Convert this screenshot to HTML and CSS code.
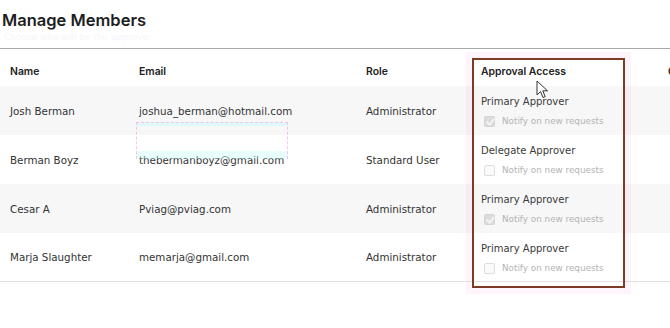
FILE: index.html
```html
<!DOCTYPE html>
<html>
<head>
<meta charset="utf-8">
<link rel="stylesheet" href="styles.css">
</head>
<body>
<div class="page">
  <header class="head">
    <h1 class="title">Manage Members</h1>
    <p class="subtitle">Choose who will be the approver</p>
  </header>
  <div class="table">
    <div class="row hdr">
      <div class="cell">Name</div>
      <div class="cell">Email</div>
      <div class="cell">Role</div>
      <div class="cell">Approval Access</div>
      <div class="cell">C</div>
    </div>
    <div class="row shade">
      <div class="cell">Josh Berman</div>
      <div class="cell">joshua_berman@hotmail.com</div>
      <div class="cell">Administrator</div>
      <div class="cell appr">
        <div class="atype">Primary Approver</div>
        <label class="notify"><span class="cb checked"></span>Notify on new requests</label>
      </div>
      <div class="cell"></div>
    </div>
    <div class="row">
      <div class="cell">Berman Boyz</div>
      <div class="cell">thebermanboyz@gmail.com</div>
      <div class="cell">Standard User</div>
      <div class="cell appr">
        <div class="atype">Delegate Approver</div>
        <label class="notify"><span class="cb"></span>Notify on new requests</label>
      </div>
      <div class="cell"></div>
    </div>
    <div class="row shade">
      <div class="cell">Cesar A</div>
      <div class="cell">Pviag@pviag.com</div>
      <div class="cell">Administrator</div>
      <div class="cell appr">
        <div class="atype">Primary Approver</div>
        <label class="notify"><span class="cb checked"></span>Notify on new requests</label>
      </div>
      <div class="cell"></div>
    </div>
    <div class="row last">
      <div class="cell">Marja Slaughter</div>
      <div class="cell">memarja@gmail.com</div>
      <div class="cell">Administrator</div>
      <div class="cell appr">
        <div class="atype">Primary Approver</div>
        <label class="notify"><span class="cb"></span>Notify on new requests</label>
      </div>
      <div class="cell"></div>
    </div>
    <div class="highlight"></div>
    <div class="selection"></div>
    <svg class="cursor" width="14" height="20" viewBox="0 0 14 20"><path d="M1 1 L1 15 L4.5 11.5 L7 17.5 L9.2 16.6 L6.8 10.8 L11.5 10.8 Z" fill="#fff" stroke="#333" stroke-width="1"/></svg>
  </div>
</div>
</body>
</html>
```
FILE: styles.css
```css
* { box-sizing: border-box; }
html, body { margin: 0; padding: 0; background: #fff; }
body {
  font-family: "DejaVu Sans", "Open Sans", sans-serif;
  color: #333;
  width: 670px;
  height: 328px;
  overflow: hidden;
}
.page { width: 670px; }
.head {
  height: 49px;
  padding: 10px 0 0 2px;
  border-bottom: 1px solid #a9a9a9;
}
.title {
  margin: 0;
  font-family: "Inter", "DejaVu Sans", sans-serif;
  font-size: 16.5px;
  font-weight: 600;
  color: #1e1e1e;
  line-height: 20px;
}
.subtitle {
  margin: 1px 0 0 2px;
  font-size: 9px;
  line-height: 12px;
  color: #f6f6fa;
}
.table { position: relative; }
.row {
  display: grid;
  grid-template-columns: 129px 227px 115px 187px 1fr;
  padding-left: 10px;
  height: 49px;
  align-items: center;
  font-size: 10.3px;
  line-height: 16px;
  color: #333;
}
.row.hdr {
  height: 37px;
  padding-top: 9px;
  font-family: "Inter", "DejaVu Sans", sans-serif;
  font-weight: 600;
  color: #222;
  font-size: 10.4px;
}
.row.shade { background: #f7f7f8; }
.row.last { border-bottom: 1px solid #e2e2e2; }
.cell { white-space: nowrap; }
.appr { align-self: stretch; padding-top: 9px; }
.atype { font-size: 10px; color: #3a3a3a; line-height: 14px; }
.notify {
  display: flex;
  align-items: center;
  gap: 7px;
  margin-top: 6px;
  padding-left: 3px;
  font-size: 8.8px;
  line-height: 12px;
  color: #b4b4b4;
}
.cb {
  width: 11px;
  height: 11px;
  border: 1px solid #ddd;
  border-radius: 2px;
  background: #fafafa;
  position: relative;
}
.cb.checked { background: #dcdcdc; border-color: #d4d4d4; }
.cb.checked::after {
  content: "";
  position: absolute;
  left: 3px;
  top: 0px;
  width: 3px;
  height: 6px;
  border: solid #f4f4f4;
  border-width: 0 2px 2px 0;
  transform: rotate(40deg);
}
.highlight {
  position: absolute;
  left: 472px;
  top: 9px;
  width: 153px;
  height: 230px;
  border: 2px solid #7d3a25;
  box-shadow: 0 0 0 6px rgba(255, 120, 200, 0.08);
  pointer-events: none;
}
.selection {
  position: absolute;
  left: 136px;
  top: 73px;
  width: 152px;
  height: 37px;
  border: 1px dashed rgba(255, 150, 230, 0.6);
  border-bottom: none;
  background: linear-gradient(to bottom, rgba(190, 255, 250, 0.45) 0, rgba(190, 255, 250, 0.45) 3px, transparent 3px, transparent 28px, rgba(190,255,250,0.35) 28px);
  pointer-events: none;
}
.cursor {
  position: absolute;
  left: 536px;
  top: 31px;
}
```
